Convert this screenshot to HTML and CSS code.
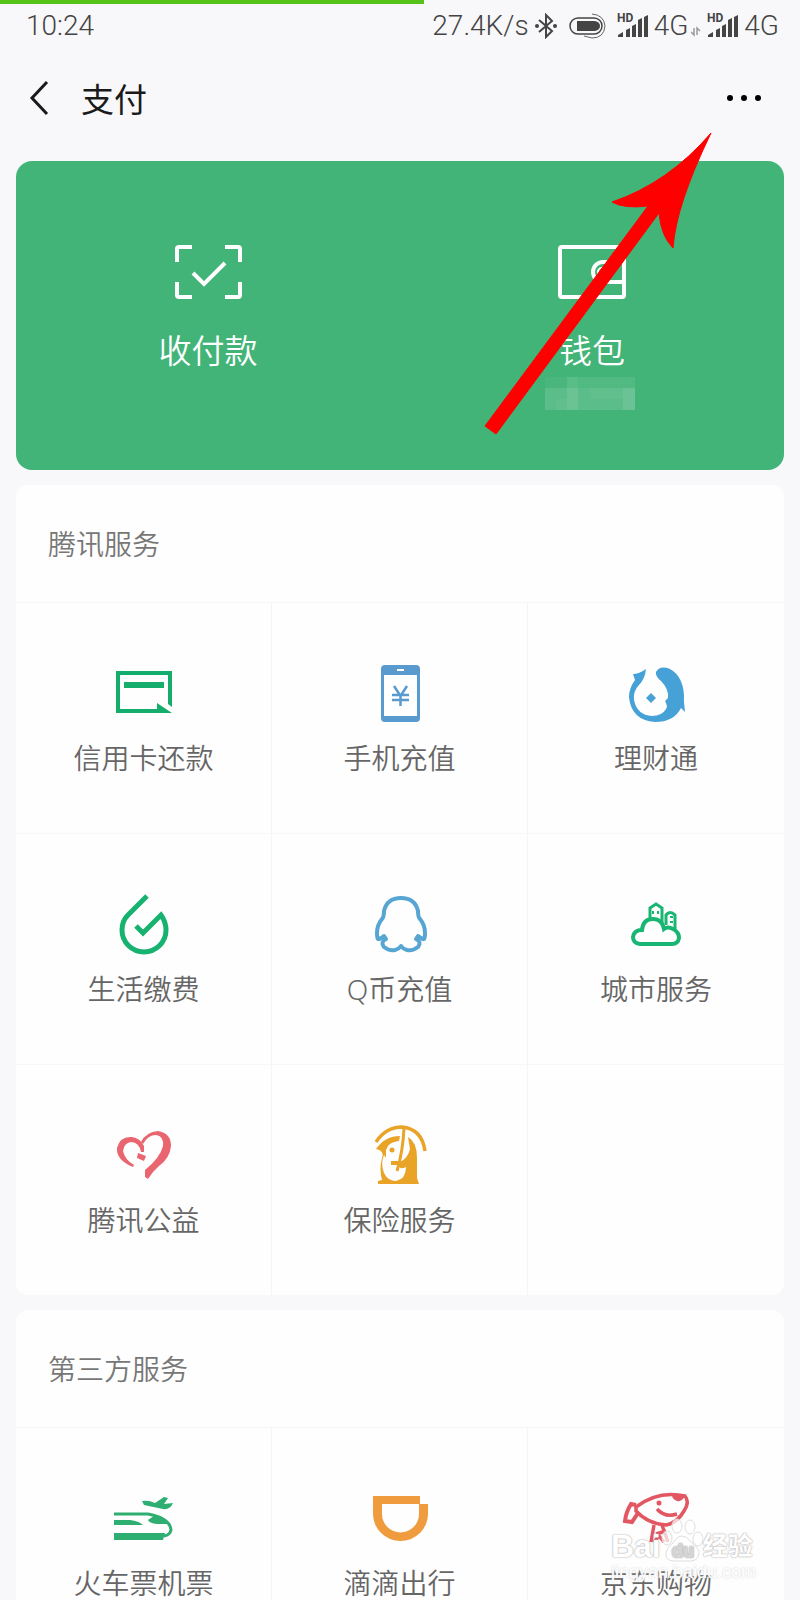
FILE: index.html
```html
<!DOCTYPE html>
<html lang="zh-CN">
<head>
    <meta charset="utf-8">
    <title>支付</title>
    <meta name="viewport" content="width=device-width, initial-scale=1">
    <link rel="stylesheet" href="styles.css">
</head>
<body>
<div class="page">
    <div class="progress"></div>

    <div class="status-bar">
        <span class="clock">10:24</span>
        <span>27.4K/s</span>
        <svg class="bluetooth" width="22" height="26" viewBox="0 0 22 26"><path d="M4 7L17 18L11 24V2L17 8L4 19" fill="none" stroke="#444" stroke-width="2"/><circle cx="2" cy="13" r="2" fill="#444"/><circle cx="20" cy="13" r="2" fill="#444"/></svg>
        <svg class="battery" width="37" height="26" viewBox="0 0 37 26"><rect x="1" y="5" width="32" height="16" rx="8" fill="none" stroke="#444" stroke-width="1.5"/><path d="M8 8H26Q31 9 31 13T26 18H8Z" fill="#444"/><path d="M23 1Q35 2 36 13Q35 25 23 25L15 23" fill="none" stroke="#666"/></svg>
        <svg class="signal" width="32" height="26" viewBox="0 0 32 26"><text x="0" y="9">HD</text><path d="M1 24V22L6 19V24ZM9 24V17L13 15V24ZM15 24V13L19 11V24ZM21 24V7L25 5V24ZM27 24V4L31 2V24Z" fill="#444"/></svg>
        <span>4G</span>
        <svg class="transfer" width="10" height="26" viewBox="0 0 10 26"><path d="M3 15V22L0 19M6 22V15L9 18" fill="none" stroke="#999" stroke-width="1.5"/></svg>
        <svg class="signal" width="32" height="26" viewBox="0 0 32 26"><text x="0" y="9">HD</text><path d="M1 24V22L6 19V24ZM9 24V17L13 15V24ZM15 24V13L19 11V24ZM21 24V7L25 5V24ZM27 24V4L31 2V24Z" fill="#444"/></svg>
        <span>4G</span>
    </div>

    <header class="nav">
        <button class="nav-button" aria-label="返回">
            <svg width="20" height="36" viewBox="0 0 20 36"><path d="M18 2L3 18L18 34" fill="none" stroke="#1a1a1a" stroke-width="3"/></svg>
        </button>
        <h1>支付</h1>
        <button class="nav-button" aria-label="更多">
            <svg width="36" height="8" viewBox="0 0 36 8"><circle cx="4" cy="4" r="3"/><circle cx="18" cy="4" r="3"/><circle cx="32" cy="4" r="3"/></svg>
        </button>
    </header>

    <main>
        <div class="wallet-card">
            <button class="wallet-item">
                <svg width="68" height="54" viewBox="0 0 68 54" fill="none" stroke="#fff" stroke-width="4"><path d="M18 2H5Q3 2 3 4V17M51 2H64Q66 2 66 4V17M3 37V50Q3 52 5 52H18M66 37V50Q66 52 64 52H51M19 28L30 39L51 18"/></svg>
                <span>收付款</span>
            </button>
            <button class="wallet-item">
                <svg width="68" height="54" viewBox="0 0 68 54" fill="none" stroke="#fff" stroke-width="4"><rect x="2" y="2" width="64" height="50" rx="2"/><path d="M66 37H45A10 10 0 0 1 45 17H58"/><circle cx="44" cy="27" r="4" stroke-width="2"/></svg>
                <span>钱包</span>
                <svg class="mosaic" width="90" height="33" viewBox="0 0 90 33" fill="#fff"><path d="M0 0H22V11H0Z" opacity=".04"/><path d="M22 0H33V11H22Z" opacity=".12"/><path d="M33 0H90V11H33Z" opacity=".08"/><path d="M0 11H90V33H0Z" opacity=".13"/><path d="M22 11H33V33H22ZM78 11H90V33H78Z" opacity=".1"/><path d="M45 11H78V22H45ZM11 22H22V33H11Z" opacity=".04"/></svg>
            </button>
        </div>

        <section class="services">
            <h2>腾讯服务</h2>
            <div class="grid">
                <button class="tile">
                    <svg class="icon" viewBox="0 0 64 64" fill="#14ad6b"><path d="M4 9H60V45L56 42V13H8V47H45V41L60 51H4Z"/><path d="M12 20H52V26H12Z"/></svg>
                    <span>信用卡还款</span>
                </button>
                <button class="tile">
                    <svg class="icon" viewBox="0 0 64 64"><rect x="13" y="3" width="39" height="57" rx="4" fill="#5a9bcf"/><path d="M16 13H49V54H16ZM29 7H36V9H29Z" fill="#fff"/><path d="M26 24L32.500 34L39 24M24 33H41M24 38H41M32.500 34V44" fill="none" stroke="#5a9bcf" stroke-width="2.500"/></svg>
                    <span>手机充值</span>
                </button>
                <button class="tile">
                    <svg class="icon" viewBox="0 0 64 64" fill="#46a2d6"><path d="M9 12Q15 12 22 7Q21 17 15 23Q9 29 10 38Q13 53 28 54Q38 54 42 47Q44 44 41 39L44 36Q45 27 37 19Q31 14 32 10Q36 3 46 7Q61 15 60 40L61 50L57 46Q50 60 31 60Q7 58 5 35Q5 26 11 18Z"/><path d="M27 31L32 36L27 41L22 36Z"/></svg>
                    <span>理财通</span>
                </button>
                <button class="tile">
                    <svg class="icon" viewBox="0 0 64 64"><path d="M35 3L16 22Q10 28 10 37A22 22 0 0 0 54 37Q54 29 49 22L31 40L24 33" fill="none" stroke="#17b26f" stroke-width="5"/></svg>
                    <span>生活缴费</span>
                </button>
                <button class="tile">
                    <svg class="icon" viewBox="0 0 64 64"><path d="M33 5Q19 5 16 18Q16 24 14 26Q9 32 9 40Q9 47 11 46Q14 45 16 43L18 46Q12 49 16 54Q21 58 27 57Q31 56 33 53Q35 56 39 57Q45 58 50 54Q54 49 48 46L50 43Q52 45 55 46Q57 47 57 40Q57 32 52 26Q50 24 50 18Q47 5 33 5Z" fill="none" stroke="#56a5d3" stroke-width="4" stroke-linejoin="round"/></svg>
                    <span>Q币充值</span>
                </button>
                <button class="tile">
                    <svg class="icon" viewBox="0 0 64 64" fill="none" stroke="#18b573" stroke-width="3.500"><path d="M16 51Q9 50 9 44Q10 37 18 37Q19 26 29 26Q38 26 40 36Q44 33 49 36Q55 39 55 45Q54 51 48 51Z" stroke-width="4"/><path d="M26 27V15L32 11L38 15V32M42 32V22Q46 17 51 22V36" stroke-width="3"/><path d="M29 18V21M34 18V21M46 24H49M46 29H49" stroke-width="2"/></svg>
                    <span>城市服务</span>
                </button>
                <button class="tile">
                    <svg class="icon" viewBox="0 0 64 64" fill="#e9656f"><path d="M21 43Q4 36 5 24Q8 12 20 13Q28 14 32 22V28H29Q27 18 19 18Q12 19 11 27Q13 36 22 41Z"/><path d="M29 18Q34 8 46 7Q59 9 59 22Q58 34 47 42Q40 48 36 55L33 53V46Q48 34 51 22Q52 12 44 11Q36 11 31 20Z"/><path d="M26 29L34 32L32 37L25 34Z"/></svg>
                    <span>腾讯公益</span>
                </button>
                <button class="tile">
                    <svg class="icon" viewBox="0 0 64 64" fill="none" stroke="#e9a326" stroke-width="4"><path d="M8 18Q18 3 34 3Q54 5 57 27" stroke-width="3.500"/><path d="M36 4Q35 27 29 47" stroke-width="3"/><path d="M8 25Q17 12 32 12L31 17Q20 18 18 26V34L16 31L15 34Q13 41 16 49Q20 57 28 57Q38 55 38 43Q32 46 31 42L32 38Q40 34 42 25L40 13Q49 18 49 34V54L51 60H10V57L14 56Q11 45 14 34Q17 27 8 25Z" fill="#e9a326" stroke="none"/><path d="M23 39H33" stroke-width="4"/><circle cx="24" cy="26" r="2.500" fill="#e9a326" stroke="none"/></svg>
                    <span>保险服务</span>
                </button>
                <div class="tile"></div>
            </div>
        </section>

        <section class="services">
            <h2>第三方服务</h2>
            <div class="grid">
                <button class="tile">
                    <svg class="icon" viewBox="0 0 64 64" fill="#2eae70"><path d="M2 27H36Q58 31 59 43Q58 48 52 49" fill="none" stroke="#2eae70" stroke-width="3"/><path d="M2 46H53L51 53H2ZM2 33H18Q27 34 31 38H2ZM36 33L42 29Q51 32 56 37H45Q37 36 36 33ZM30 14Q37 13 43 16L52 10L56 11L52 17L61 16Q58 23 51 22L32 18Z"/></svg>
                    <span>火车票机票</span>
                </button>
                <button class="tile">
                    <svg class="icon" viewBox="0 0 64 64"><path fill-rule="evenodd" d="M5 9H52V17H60V27A27.500 27 0 0 1 5 27ZM14 17V27A18.500 18.500 0 0 0 51 27V17Z" fill="#ef9b3e"/></svg>
                    <span>滴滴出行</span>
                </button>
                <button class="tile">
                    <svg class="icon" viewBox="0 0 64 64" fill="none" stroke="#e25762" stroke-width="3.500"><path d="M12 20Q34 3 61 9Q66 15 60 24Q53 36 42 38Q24 37 12 24Z"/><path d="M12 18L7 17Q2 25 1 34L8 35L14 26" stroke-width="4"/><path d="M33 22Q41 31 53 27M30 38L27 55M32 47L42 44M38 38L44 55M30 55L35 49L40 55"/><circle cx="35" cy="16" r="2.500" fill="#e25762" stroke="none"/><path d="M48 8L61 9Q58 15 53 14Q48 12 48 8Z" fill="#e25762" stroke="none"/></svg>
                    <span>京东购物</span>
                </button>
            </div>
        </section>
    </main>

    <!-- arrow pointing at the "more" button -->
    <svg class="pointer" width="228" height="302" viewBox="0 0 228 302"><path d="M227 3Q184 53 128 72Q140 79 164 76L1 296L12 304L175 83Q177 106 189 118Q192 75 227 3Z" fill="#f00" stroke="#f00"/></svg>

    <div class="watermark">
        <div class="watermark-logo">
            <span class="watermark-latin">Bai</span>
            <svg width="42" height="44" viewBox="0 0 42 44"><g fill="#fff" fill-opacity=".7" stroke="#ddd"><ellipse cx="6" cy="20" rx="5" ry="7"/><ellipse cx="16" cy="8" rx="5" ry="7"/><ellipse cx="29" cy="9" rx="5" ry="7"/><ellipse cx="37" cy="21" rx="5" ry="7"/><path d="M21 18Q26 18 30 24Q39 31 38 36Q36 43 30 43H12Q4 42 5 35Q6 29 12 25Q16 18 21 18Z"/></g><text x="11" y="39">du</text></svg>
            <span>经验</span>
        </div>
        <div class="watermark-url">jingyan.baidu.com</div>
    </div>
</div>
</body>
</html>
```
FILE: styles.css
```css
* {
    box-sizing: border-box;
}
body {
    margin: 0;
    background: #f8f8fa;
    color: #666;
    font-family: "Noto Sans", "Noto Sans CJK SC", sans-serif;
}
button {
    margin: 0;
    padding: 0;
    border: none;
    background: none;
    color: inherit;
    font: inherit;
    cursor: pointer;
}
svg {
    display: block;
    flex: none;
}
.page {
    position: relative;
    height: 100vh;
    overflow: hidden;
}
.progress {
    width: 53%;
    height: 4px;
    background: #55c318;
}

/* status bar */
.status-bar {
    display: flex;
    align-items: center;
    height: 43px;
    padding: 0 21px 0 26px;
    color: #444;
    font-family: Roboto, sans-serif;
    font-size: 28px;
    font-weight: 300;
}
.clock {
    margin-right: auto;
}
.bluetooth {
    margin-left: 6px;
}
.battery {
    margin: 0 11px 0 12px;
}
.signal {
    margin-right: 5px;
}
.signal text {
    fill: #444;
    font-size: 12px;
    font-weight: 700;
}
.transfer {
    margin: 0 6px 0 3px;
}

/* title bar */
.nav {
    display: flex;
    align-items: center;
    height: 101px;
    padding: 0 38px 0 29px;
}
.nav h1 {
    margin: 0 auto 0 32px;
    color: #1a1a1a;
    font-size: 33px;
    font-weight: 400;
}

main {
    padding: 13px 16px 0;
}
.wallet-card {
    display: grid;
    grid-template-columns: 1fr 1fr;
    padding: 84px 0 60px;
    border-radius: 16px;
    background: #43b478;
    color: #fff;
}
.wallet-item {
    display: flex;
    flex-direction: column;
    align-items: center;
    font-size: 33px;
    font-weight: 350;
    line-height: 48px;
}
.wallet-item span {
    margin-top: 28px;
}
.mosaic {
    margin: 2px 4px 0 0;
}

/* service lists */
.services {
    margin-top: 15px;
    border-radius: 12px;
    background: #fefefe;
}
.services h2 {
    margin: 0;
    padding: 39px 32px 38px;
    color: #777;
    font-size: 28px;
    font-weight: 350;
    line-height: 40px;
}
.grid {
    display: grid;
    grid-template-columns: repeat(3, 1fr);
}
.tile {
    display: flex;
    flex-direction: column;
    align-items: center;
    padding: 59px 0 55px;
    border-top: 1px solid #f7f7f7;
    border-right: 1px solid #f5f5f5;
    font-size: 28px;
    font-weight: 350;
    line-height: 40px;
}
.tile:nth-child(3n) {
    border-right: none;
}
.icon {
    width: 64px;
    height: 64px;
    margin-bottom: 12px;
    overflow: visible;
}

.pointer {
    position: absolute;
    top: 130px;
    right: 88px;
    overflow: visible;
    pointer-events: none;
}

.watermark {
    position: absolute;
    right: 44px;
    bottom: 18px;
    color: #fff;
    font-family: "Liberation Sans", "Noto Sans CJK SC", sans-serif;
    pointer-events: none;
}
.watermark-logo {
    display: flex;
    align-items: flex-end;
    font-size: 25px;
    font-weight: 700;
    line-height: 32px;
    text-shadow: 0 0 2px #aaa, 0 0 1px #bbb;
}
.watermark-latin {
    font-size: 32px;
}
.watermark text {
    fill: #fff;
    stroke: #ddd;
    font-size: 18px;
}
.watermark-url {
    font-size: 18px;
    line-height: 20px;
    text-shadow: 0 0 2px #ccc;
}
```
